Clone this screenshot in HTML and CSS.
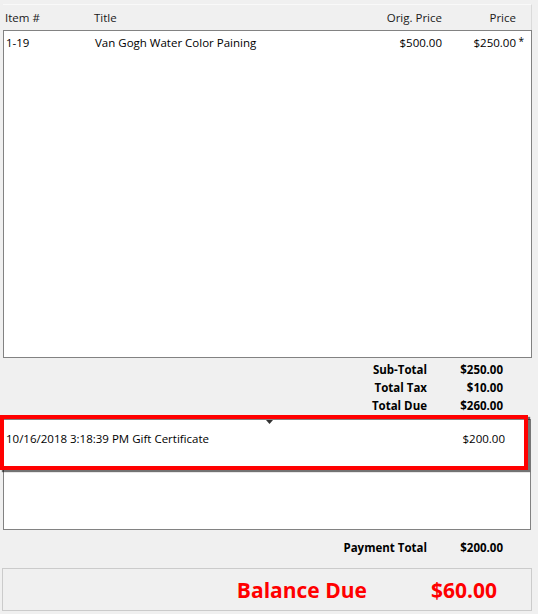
FILE: index.html
```html
<!DOCTYPE html>
<html lang="en">
  <head>
    <meta charset="UTF-8" />
    <meta name="viewport" content="width=device-width, initial-scale=1.0" />
    <title>Checkout</title>
    <link rel="stylesheet" href="styles.css">
  </head>
  <body>
    <div class="window">
      <div class="items">
        <div class="items_head">
          <span class="col_item">Item #</span>
          <span class="col_title">Title</span>
          <span class="col_orig">Orig. Price</span>
          <span class="col_price">Price</span>
        </div>
        <div class="items_list">
          <div class="item_row">
            <span class="col_item">1-19</span>
            <span class="col_title">Van Gogh Water Color Paining</span>
            <span class="col_orig">$500.00</span>
            <span class="col_price">$250.00<span class="mark">*</span></span>
          </div>
        </div>
      </div>

      <div class="totals">
        <span class="label">Sub-Total</span><span class="value">$250.00</span>
        <span class="label">Total Tax</span><span class="value">$10.00</span>
        <span class="label">Total Due</span><span class="value">$260.00</span>
      </div>

      <div class="payments">
        <div class="payment_list">
          <div class="payment_row">
            <span>10/16/2018 3:18:39 PM Gift Certificate</span>
            <span class="pay_amount">$200.00</span>
          </div>
        </div>
        <div class="highlight"></div>
        <svg class="grip" width="7" height="4" viewBox="0 0 7 4">
          <path d="M0 0 L3.5 4 L7 0 Z" fill="#333" />
        </svg>
      </div>

      <div class="totals pay_total">
        <span class="label">Payment Total</span><span class="value">$200.00</span>
      </div>

      <div class="balance">
        <span class="balance_label">Balance Due</span>
        <span class="balance_value">$60.00</span>
      </div>
    </div>
  </body>
</html>
```

FILE: styles.css
```css
body {
  margin: 0;
  background: #f0f0f0;
  font-family: "Open Sans", "Noto Sans", sans-serif;
  font-size: 11.5px;
  color: #000;
}
.window {
  width: 538px;
  height: 614px;
  display: flex;
  flex-direction: column;
}

/* item grid */
.items {
  margin: 4px 6px 0 3px;
}
.items_head {
  height: 25px;
  display: flex;
  align-items: center;
  border-top: 1px solid #f9f9f9;
  border-right: 1px solid #dadada;
  color: #1a1a1a;
}
.items_list {
  height: 326px;
  background: #fff;
  border: 1px solid #828282;
}
.item_row {
  height: 22px;
  display: flex;
  align-items: center;
  margin-left: -1px;
}
.col_item {
  width: 89px;
  padding-left: 2px;
}
.item_row .col_item {
  padding-left: 3px;
}
.col_title {
  flex: 1;
}
.col_orig {
  width: 120px;
  text-align: right;
}
.col_price {
  width: 74px;
  padding-right: 15px;
  text-align: right;
  position: relative;
}
.mark {
  position: absolute;
  right: 7px;
  top: -1px;
  font-size: 10px;
}

/* totals */
.totals {
  display: grid;
  grid-template-columns: 1fr 76px;
  padding-right: 35px;
  margin-top: 3px;
  font-weight: bold;
  line-height: 18px;
}
.label {
  text-align: right;
}
.value {
  text-align: right;
}

/* payments */
.payments {
  position: relative;
  margin: 4px 7px 0 3px;
}
.grip {
  position: absolute;
  left: 263px;
  top: 1px;
}
.payment_list {
  height: 109px;
  background: #fff;
  border: 1px solid #828282;
}
.payment_row {
  display: flex;
  justify-content: space-between;
  padding: 11px 25px 0 2px;
}
.highlight {
  position: absolute;
  left: -3px;
  top: -4px;
  width: 520px;
  height: 47px;
  border: 4px solid #ff0000;
  box-shadow: 2px 2px 1px rgba(0, 0, 0, 0.55);
}

.pay_total {
  margin-top: 9px;
}

/* balance */
.balance {
  margin: 11px 6px 0 2px;
  height: 41px;
  border: 1px solid #cbcbcb;
  display: flex;
  align-items: center;
  justify-content: flex-end;
  gap: 64px;
  padding-right: 34px;
  color: #ff0000;
  font-weight: bold;
  font-size: 21px;
}
```
